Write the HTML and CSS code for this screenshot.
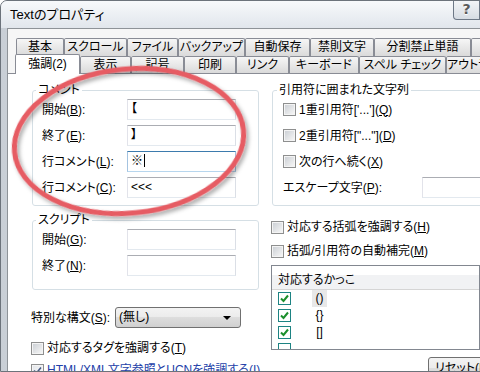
FILE: index.html
```html
<!DOCTYPE html>
<html lang="ja">
<head>
    <meta charset="UTF-8">
    <title>Textのプロパティ</title>
    <link rel="stylesheet" href="styles.css">
</head>
<body>
    <div class="window">
        <div class="titlebar">
            <span class="title">Textのプロパティ</span>
            <div class="caption-buttons">
                <div class="cap-btn help-btn">?</div>
                <div class="cap-btn close-btn">✕</div>
            </div>
        </div>

        <div class="client">
            <div class="tab-row row-1">
                <div class="tab">基本</div>
                <div class="tab">スクロール</div>
                <div class="tab">ファイル</div>
                <div class="tab">バックアップ</div>
                <div class="tab">自動保存</div>
                <div class="tab">禁則文字</div>
                <div class="tab">分割禁止単語</div>
                <div class="tab">強調(1)</div>
            </div>
            <div class="tab-row row-2">
                <div class="tab active">強調(2)</div>
                <div class="tab">表示</div>
                <div class="tab">記号</div>
                <div class="tab">印刷</div>
                <div class="tab">リンク</div>
                <div class="tab">キーボード</div>
                <div class="tab">スペル チェック</div>
                <div class="tab">アウトライン</div>
            </div>

            <div class="panel">
                <!-- left column -->
                <div class="col">
                    <fieldset class="group">
                        <legend>コメント</legend>
                        <div class="field-grid">
                            <span>開始(<u>B</u>):</span><div class="textbox">【</div>
                            <span>終了(<u>E</u>):</span><div class="textbox">】</div>
                            <span>行コメント(<u>L</u>):</span><div class="textbox focus">※<span class="caret"></span></div>
                            <span>行コメント(<u>C</u>):</span><div class="textbox">&lt;&lt;&lt;</div>
                        </div>
                    </fieldset>

                    <fieldset class="group script-group">
                        <legend>スクリプト</legend>
                        <div class="field-grid">
                            <span>開始(<u>G</u>):</span><div class="textbox"></div>
                            <span>終了(<u>N</u>):</span><div class="textbox"></div>
                        </div>
                    </fieldset>

                    <div class="syntax-row">
                        <span class="syntax-label">特別な構文(<u>S</u>):</span>
                        <div class="combo"><span>(無し)</span><span class="combo-arrow"></span></div>
                    </div>

                    <div class="check-row tag-row"><span class="box"></span><span>対応するタグを強調する(<u>T</u>)</span></div>
                    <div class="check-row html-row"><span class="box checked"><svg width="9" height="9" viewBox="0 0 9 9"><path d="M1 4.5 L3.5 7 L8 1.5" fill="none" stroke="#4a5d86" stroke-width="1.6"/></svg></span><span>HTML/XML文字参照とUCNを強調する(<u>I</u>)</span></div>
                </div>

                <!-- right column -->
                <div class="col">
                    <fieldset class="group quote-group">
                        <legend>引用符に囲まれた文字列</legend>
                        <div class="quote-list">
                            <div class="check-row"><span class="box"></span><span>1重引用符['...'](<u>Q</u>)</span></div>
                            <div class="check-row"><span class="box"></span><span>2重引用符["..."](<u>D</u>)</span></div>
                            <div class="check-row"><span class="box"></span><span>次の行へ続く(<u>X</u>)</span></div>
                            <div class="escape-row">
                                <span class="escape-label">エスケープ文字(<u>P</u>):</span>
                                <div class="textbox escape-box"></div>
                            </div>
                        </div>
                    </fieldset>

                    <div class="check-row bracket-row"><span class="box"></span><span>対応する括弧を強調する(<u>H</u>)</span></div>
                    <div class="check-row auto-row"><span class="box"></span><span>括弧/引用符の自動補完(<u>M</u>)</span></div>

                    <div class="listview">
                        <div class="lv-header">対応するかっこ</div>
                        <div class="lv-row">
                            <span class="lv-check"><svg width="11" height="11" viewBox="0 0 11 11"><path d="M2 5.5 L4.5 8 L9 2.5" fill="none" stroke="#1c8f2c" stroke-width="2"/></svg></span>
                            <span class="lv-cell selected">()</span>
                        </div>
                        <div class="lv-row">
                            <span class="lv-check"><svg width="11" height="11" viewBox="0 0 11 11"><path d="M2 5.5 L4.5 8 L9 2.5" fill="none" stroke="#1c8f2c" stroke-width="2"/></svg></span>
                            <span class="lv-cell">{}</span>
                        </div>
                        <div class="lv-row">
                            <span class="lv-check"><svg width="11" height="11" viewBox="0 0 11 11"><path d="M2 5.5 L4.5 8 L9 2.5" fill="none" stroke="#1c8f2c" stroke-width="2"/></svg></span>
                            <span class="lv-cell">[]</span>
                        </div>
                        <div class="lv-row lv-row-last">
                            <span class="lv-check"></span>
                            <span class="lv-cell"></span>
                        </div>
                    </div>

                    <div class="button reset-btn">リセット(<u>R</u>)</div>
                </div>
            </div>
        </div>
    </div>

    <svg class="marker" width="480" height="372" viewBox="0 0 480 372">
        <defs>
            <filter id="shadow" x="-10%" y="-15%" width="120%" height="135%">
                <feDropShadow dx="2" dy="3" stdDeviation="2" flood-color="#000" flood-opacity="0.35"/>
            </filter>
        </defs>
        <ellipse cx="129" cy="141" rx="115" ry="72" transform="rotate(-5.5 129 141)"
                 fill="none" stroke="#e65b63" stroke-width="5" filter="url(#shadow)"/>
    </svg>
</body>
</html>
```

FILE: styles.css
```css
/* Global */
* {
    box-sizing: border-box;
}

body {
    margin: 0;
    width: 480px;
    height: 372px;
    overflow: hidden;
    position: relative;
    background: #fff;
    color: #000;
    font-family: "Liberation Sans", "Noto Sans CJK JP", sans-serif;
    font-size: 12px;
    line-height: 14px;
    font-feature-settings: "palt";
}

u {
    text-decoration: underline;
    text-underline-offset: 1px;
}

/* Window frame */
.window {
    width: 530px;
    height: 372px;
    border: 1px solid #6c737b;
    border-radius: 7px 7px 0 0;
    background: linear-gradient(to right, #c9cfd6, #dde2e7);
    display: flex;
    flex-direction: column;
    overflow: hidden;
}

.titlebar {
    flex: none;
    height: 27px;
    display: flex;
    align-items: flex-start;
    background: linear-gradient(#f7f9fb, #e1e6ec);
}

.title {
    padding: 6px 0 0 9px;
    font-size: 13px;
    line-height: 15px;
}

.caption-buttons {
    margin-left: auto;
    margin-right: 6px;
    margin-top: -1px;
    display: flex;
}

.cap-btn {
    height: 20px;
    border: 1px solid #6d7886;
    border-top: none;
    text-align: center;
}

.help-btn {
    width: 27px;
    border-radius: 0 0 0 4px;
    background: linear-gradient(#f4f6f8, #d6dce3);
    color: #5a5a5a;
    font: bold 14px/19px "DejaVu Sans", sans-serif;
    text-shadow: 0 1px 0 #fff;
}

.close-btn {
    width: 43px;
    border-left: none;
    border-radius: 0 0 4px 0;
    background: linear-gradient(#e9a895, #c84a2f);
    color: #fff;
    line-height: 19px;
}

/* Client area + tabs */
.client {
    flex: 1;
    min-height: 0;
    margin-left: 6px;
    border-top: 1px solid #8e9398;
    border-left: 1px solid #8e9398;
    background: #f6f6f6;
    padding-top: 9px;
    display: flex;
    flex-direction: column;
}

.tab-row {
    flex: none;
    display: grid;
    height: 18px;
    align-items: start;
}

.row-1 {
    grid-template-columns: 48px 63px 51px 67px 65px 64px 97px 60px;
    padding-left: 8px;
}

.row-2 {
    height: 17px;
    grid-template-columns: 65px 51px 53px 52px 53px 70px 87px 60px;
    padding-left: 7px;
}

.tab {
    height: 18px;
    border: 1px solid #898c95;
    border-bottom: none;
    border-radius: 2px 2px 0 0;
    background: linear-gradient(#f6f6f6, #dadada);
    text-align: center;
    line-height: 16px;
    white-space: nowrap;
    overflow: hidden;
}

.row-2 .tab {
    height: 17px;
}

.row-2 .tab.active {
    height: 20px;
    margin-top: -2px;
    position: relative;
    z-index: 1;
    background: #fff;
    line-height: 18px;
}

/* Tab page */
.panel {
    flex: 1;
    min-height: 0;
    background: #fff;
    border-top: 1px solid #898c95;
    display: grid;
    grid-template-columns: 228px 260px;
    column-gap: 12px;
    align-items: start;
    padding: 9px 0 0 23px;
}

.group {
    margin: 0 0 0 1px;
    padding: 0 8px 7px 9px;
    border: 1px solid #d5dfe5;
    border-radius: 3px;
    min-width: 0;
}

.group legend {
    margin-left: -6px;
    padding: 0 2px;
    line-height: 14px;
}

.script-group {
    margin-top: 7px;
    padding-bottom: 13px;
}

.field-grid {
    display: grid;
    grid-template-columns: 85px 109px;
    grid-auto-rows: 21px;
    row-gap: 5px;
    align-items: center;
    margin-top: 2px;
}

.textbox {
    height: 21px;
    border: 1px solid;
    border-color: #abadb3 #dbdfe6 #e3e9ef #e2e3ea;
    background: #fff;
    padding: 0 3px;
    line-height: 19px;
    white-space: nowrap;
}

.textbox.focus {
    border-color: #3d7bad #a4c3e0 #b7d6ee #a4c3e0;
}

.caret {
    display: inline-block;
    width: 1px;
    height: 13px;
    background: #000;
    vertical-align: -2px;
    margin-left: 1px;
}

.syntax-row {
    display: flex;
    align-items: center;
    margin-top: 17px;
}

.syntax-label {
    width: 84px;
}

.combo {
    width: 126px;
    height: 21px;
    border: 1px solid #707070;
    border-radius: 3px;
    background: linear-gradient(#f3f3f3, #ebebeb 50%, #dddddd 50%, #d0d0d0);
    padding-left: 3px;
    line-height: 19px;
    display: flex;
    align-items: center;
}

.combo-arrow {
    margin-left: auto;
    margin-right: 9px;
    width: 0;
    height: 0;
    border-left: 4px solid transparent;
    border-right: 4px solid transparent;
    border-top: 4px solid #000;
}

/* Checkboxes */
.check-row {
    display: flex;
    align-items: center;
    gap: 3px;
    height: 14px;
    white-space: nowrap;
}

.box {
    flex: none;
    width: 13px;
    height: 13px;
    border: 1px solid #8e8f8f;
    padding: 1px;
    background: linear-gradient(135deg, #cdd1d6, #f5f5f5) content-box, #f4f4f4;
    display: flex;
    align-items: center;
    justify-content: center;
}

.box.checked {
    background: linear-gradient(135deg, #e4e7eb, #fafafa) content-box, #f4f4f4;
}

.tag-row {
    margin-top: 13px;
}

.html-row {
    margin-top: 8px;
    color: #2341a8;
}

.quote-group {
    padding: 0 0 7px 10px;
}

.quote-list {
    display: flex;
    flex-direction: column;
    gap: 5px;
    margin-top: 2px;
}

.quote-list .check-row {
    height: 21px;
}

.escape-row {
    display: flex;
    align-items: center;
    height: 21px;
}

.escape-label {
    width: 139px;
}

.escape-box {
    width: 100px;
}

.bracket-row {
    margin-top: 14px;
}

.auto-row {
    margin-top: 10px;
}

/* List view */
.listview {
    width: 209px;
    height: 85px;
    margin-top: 7px;
    border: 1px solid #828790;
    overflow: hidden;
    background: #fff;
}

.lv-header {
    height: 24px;
    padding: 7px 0 0 6px;
    border-bottom: 1px solid #d5d5d5;
    background: linear-gradient(#ffffff 40%, #f1f2f4 40%);
}

.lv-row {
    height: 17px;
    display: flex;
    align-items: center;
    padding-left: 6px;
}

.lv-check {
    width: 13px;
    height: 13px;
    border: 1px solid #1d8383;
    background: #fff;
    display: flex;
    align-items: center;
    justify-content: center;
}

.lv-cell {
    margin-left: 21px;
    width: 15px;
    height: 17px;
    line-height: 17px;
    text-align: center;
}

.lv-cell.selected {
    background: #e8e8e8;
}

/* Buttons */
.button {
    height: 23px;
    border: 1px solid #707070;
    border-radius: 3px;
    background: linear-gradient(#f3f3f3, #ebebeb 50%, #dddddd 50%, #cfcfcf);
    line-height: 21px;
    padding-left: 6px;
    white-space: nowrap;
}

.reset-btn {
    width: 80px;
    margin: 7px 0 0 157px;
}

/* Red annotation ring */
.marker {
    position: absolute;
    top: 0;
    left: 0;
    pointer-events: none;
}
```
